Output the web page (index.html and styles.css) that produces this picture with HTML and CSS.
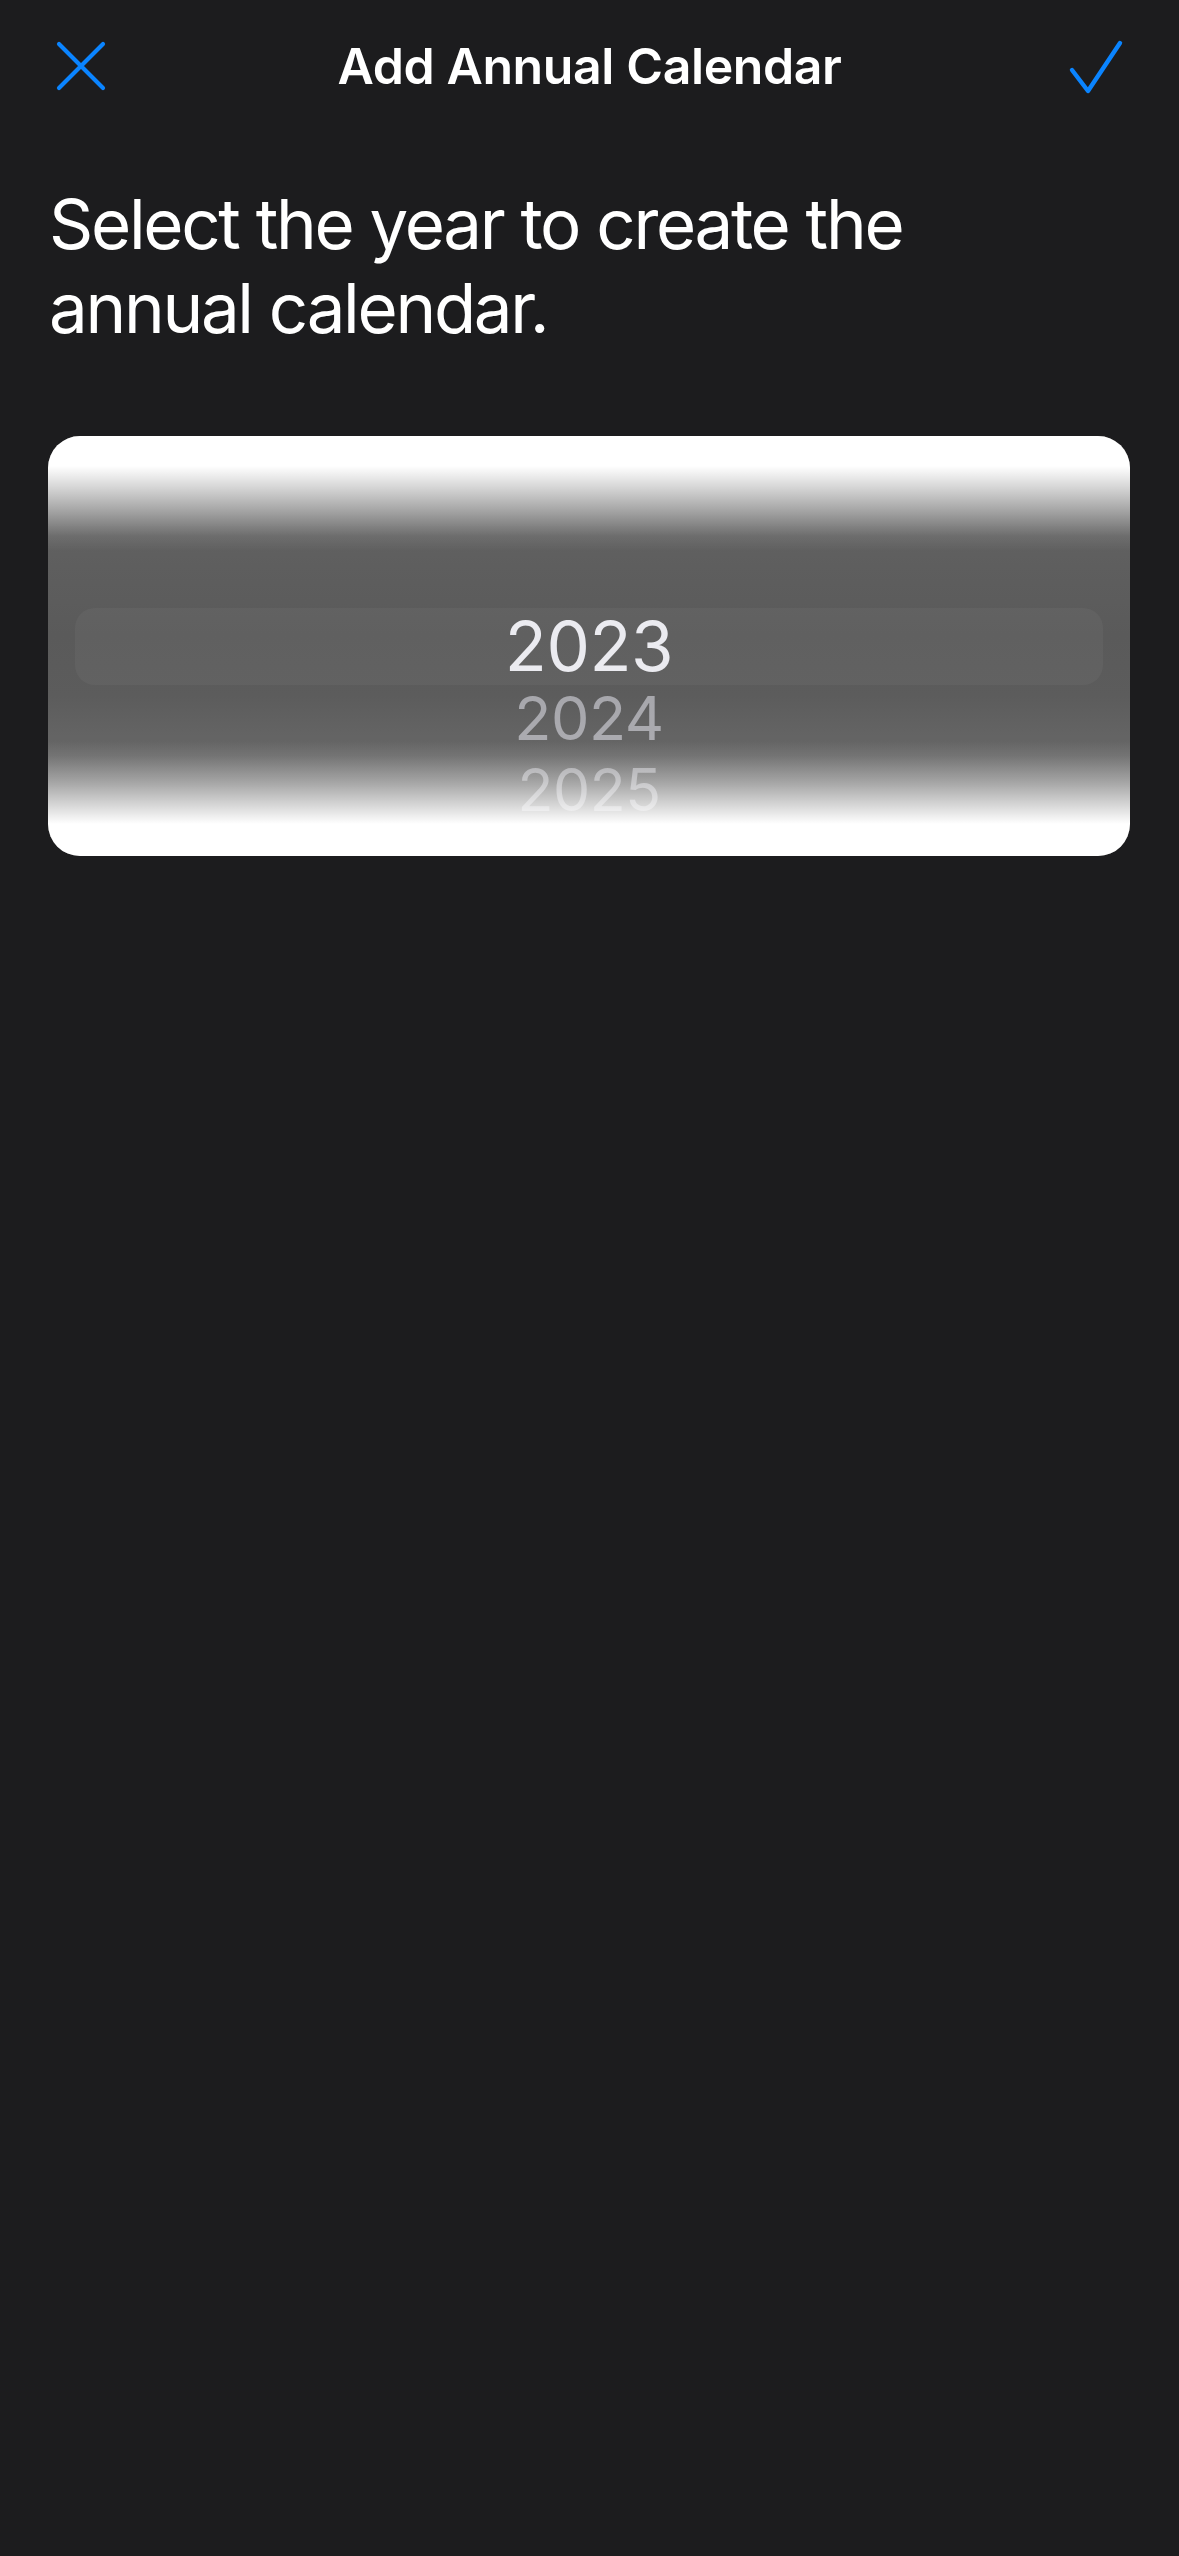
FILE: index.html
```html
<!DOCTYPE html>
<html lang="en">
<head>
<meta charset="utf-8">
<title>Add Annual Calendar</title>
<link rel="stylesheet" href="styles.css">
</head>
<body>
<div class="screen">
  <header class="navbar">
    <button class="nav-btn nav-close" aria-label="Close">
      <svg width="50" height="50" viewBox="0 0 50 50"><path d="M3 3 L47 47 M47 3 L3 47" stroke="#0a84ff" stroke-width="4.2" stroke-linecap="round" fill="none"/></svg>
    </button>
    <h1 class="nav-title">Add Annual Calendar</h1>
    <button class="nav-btn nav-done" aria-label="Done">
      <svg width="56" height="56" viewBox="0 0 56 56"><path d="M4 31 L20 52 L52 4" stroke="#0a84ff" stroke-width="4.4" stroke-linecap="round" stroke-linejoin="round" fill="none"/></svg>
    </button>
  </header>

  <p class="prompt">Select the year to create the annual calendar.</p>

  <div class="picker">
    <div class="picker-selection"></div>
    <div class="picker-rows">
      <div class="picker-row row-selected">2023</div>
      <div class="picker-row row-next">2024</div>
      <div class="picker-row row-far">2025</div>
    </div>
    <div class="picker-fade"></div>
  </div>
</div>
</body>
</html>
```

FILE: styles.css
```css
html, body {
  margin: 0;
  padding: 0;
  background: #1c1c1e;
}

.screen {
  width: 1179px;
  min-height: 2556px;
  background: #1c1c1e;
  font-family: Inter, "Liberation Sans", sans-serif;
  color: #ffffff;
  display: flex;
  flex-direction: column;
}

.navbar {
  height: 132px;
  display: flex;
  align-items: center;
  justify-content: space-between;
  padding: 0 56px 0 56px;
  box-sizing: border-box;
  position: relative;
}

.nav-btn {
  background: none;
  border: 0;
  padding: 0;
  margin: 0;
  display: flex;
  align-items: center;
  justify-content: center;
}

.nav-done {
  margin-top: 2px;
  margin-right: -1px;
}

.nav-title {
  margin: 0;
  font-size: 50px;
  font-weight: 600;
  letter-spacing: -0.4px;
  color: #ffffff;
  position: absolute;
  left: 0;
  right: 0;
  text-align: center;
  top: 36px;
  line-height: 60px;
}

.prompt {
  margin: 50px 0 0 49px;
  max-width: 980px;
  font-size: 69px;
  line-height: 84px;
  font-weight: 400;
  letter-spacing: -2.3px;
  color: #ffffff;
}

.picker {
  position: relative;
  margin: 86px 49px 0 48px;
  height: 420px;
  border-radius: 32px;
  overflow: hidden;
  background: linear-gradient(to bottom, #6a6a6a 0px, #5e5e5e 130px, #5a5a5a 200px, #5c5c5c 260px, #646464 300px, #666666 420px);
}

.picker-selection {
  position: absolute;
  top: 172px;
  left: 27px;
  right: 27px;
  height: 77px;
  border-radius: 20px;
  background: rgba(255, 255, 255, 0.04);
}

.picker-rows {
  position: relative;
  display: flex;
  flex-direction: column;
  align-items: center;
  padding-top: 174px;
}

.picker-row {
  height: 72px;
  line-height: 72px;
  text-align: center;
  font-weight: 400;
}

.row-selected {
  font-size: 69px;
  color: #ebebf0;
  letter-spacing: -0.5px;
}

.row-next {
  font-size: 61px;
  color: rgba(235, 235, 245, 0.52);
  letter-spacing: -0.5px;
}

.row-far {
  font-size: 59px;
  color: rgba(235, 235, 245, 0.45);
  letter-spacing: -0.5px;
}

.picker-fade {
  position: absolute;
  inset: 0;
  pointer-events: none;
  background: linear-gradient(to bottom,
    #ffffff 0px,
    #ffffff 30px,
    rgba(255, 255, 255, 0.75) 50px,
    rgba(255, 255, 255, 0.35) 80px,
    rgba(255, 255, 255, 0.08) 100px,
    rgba(255, 255, 255, 0) 115px,
    rgba(255, 255, 255, 0) 305px,
    rgba(255, 255, 255, 0.1) 320px,
    rgba(255, 255, 255, 0.4) 345px,
    rgba(255, 255, 255, 0.75) 370px,
    #ffffff 388px,
    #ffffff 420px);
}
```
